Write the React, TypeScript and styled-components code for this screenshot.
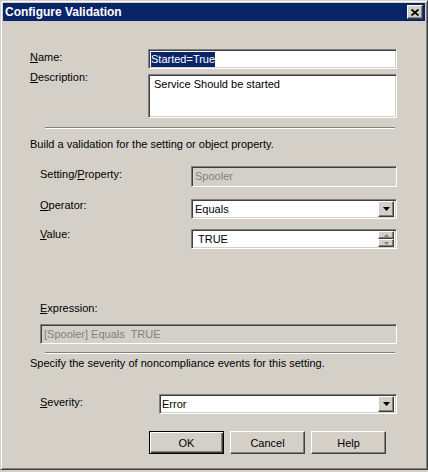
import React from 'react';
import styled, { createGlobalStyle } from 'styled-components';

const GlobalStyle = createGlobalStyle`
  html, body {
    margin: 0;
    padding: 0;
    background: #d4d0c8;
  }
  body {
    font-family: Tahoma, "Liberation Sans", Arial, sans-serif;
    font-size: 11px;
    color: #000;
  }
`;

const Window = styled.div`
  box-sizing: border-box;
  width: 428px;
  height: 470px;
  background: #d4d0c8;
  border: 1px solid;
  border-color: #d4d0c8 #404040 #404040 #d4d0c8;
  box-shadow: inset 1px 1px #fff, inset -1px -1px #808080;
  padding: 2px;
  display: flex;
  flex-direction: column;
`;

const TitleBar = styled.div`
  height: 18px;
  flex-shrink: 0;
  background: #0a246a;
  color: #fff;
  font-weight: bold;
  font-size: 12px;
  display: flex;
  align-items: center;
  justify-content: space-between;
  padding: 0 2px;
`;

const Raised = styled.div`
  box-sizing: border-box;
  background: #d4d0c8;
  border: 1px solid;
  border-color: #fff #404040 #404040 #fff;
  box-shadow: inset -1px -1px #808080;
  display: flex;
  align-items: center;
  justify-content: center;
`;

const CloseButton = styled(Raised)`
  width: 16px;
  height: 14px;
`;

const Content = styled.div`
  display: flex;
  flex-direction: column;
  padding: 0 28px 0 27px;
`;

const Row = styled.div<{ $top: number; $indent?: number }>`
  display: flex;
  align-items: flex-start;
  margin-top: ${(p) => p.$top}px;
  padding-left: ${(p) => p.$indent ?? 0}px;
`;

const Label = styled.div<{ $width?: number; $offset?: number }>`
  width: ${(p) => (p.$width ? `${p.$width}px` : 'auto')};
  flex-shrink: 0;
  margin-top: ${(p) => p.$offset ?? 0}px;
  line-height: 13px;
  white-space: nowrap;
`;

const Key = styled.span`
  text-decoration: underline;
`;

const Field = styled.div<{ $width: number; $height: number; $disabled?: boolean; $pad?: number }>`
  box-sizing: border-box;
  width: ${(p) => p.$width}px;
  height: ${(p) => p.$height}px;
  background: ${(p) => (p.$disabled ? '#d4d0c8' : '#fff')};
  color: ${(p) => (p.$disabled ? '#808080' : '#000')};
  border: 1px solid;
  border-color: #808080 #fff #fff #808080;
  box-shadow: inset 1px 1px #404040, inset -1px -1px #d4d0c8;
  padding: 2px 2px 0 ${(p) => p.$pad ?? 3}px;
  line-height: 15px;
  display: flex;
  align-items: flex-start;
  white-space: nowrap;
`;

const FieldText = styled.span`
  flex: 1;
`;

const Selected = styled.span`
  background: #0a246a;
  color: #fff;
`;

const DropButton = styled(Raised)`
  width: 16px;
  height: 16px;
  margin-left: auto;
  margin-top: -1px;
`;

const Spin = styled.div`
  display: flex;
  flex-direction: column;
  margin-left: auto;
  margin-top: -1px;
`;

const SpinButton = styled(Raised)`
  width: 16px;
  height: 8px;
`;

const Separator = styled.div<{ $top: number }>`
  margin: ${(p) => p.$top}px 0 0 15px;
  width: 350px;
  height: 1px;
  background: #808080;
  border-bottom: 1px solid #fff;
`;

const Text = styled.div<{ $top: number }>`
  margin-top: ${(p) => p.$top}px;
  line-height: 13px;
  white-space: nowrap;
`;

const Buttons = styled.div`
  display: flex;
  gap: 6px;
  margin-top: 17px;
  padding-left: 119px;
`;

const Button = styled(Raised)<{ $default?: boolean }>`
  width: 75px;
  height: 23px;
  ${(p) =>
    p.$default
      ? `
    border-color: #000;
    box-shadow: inset 1px 1px #fff, inset -1px -1px #404040, inset -2px -2px #808080;
  `
      : ''}
`;

const ArrowDown = () => (
  <svg width="7" height="4" viewBox="0 0 7 4">
    <path d="M0 0h7L3.5 4z" fill="#000" />
  </svg>
);

const SmallArrow = ({ up }: { up?: boolean }) => (
  <svg width="5" height="3" viewBox="0 0 5 3">
    <path d={up ? 'M2.5 0L5 3H0z' : 'M0 0h5L2.5 3z'} fill="#808080" />
  </svg>
);

export default function App() {
  return (
    <>
      <GlobalStyle />
      <Window>
        <TitleBar>
          <span>Configure Validation</span>
          <CloseButton>
            <svg width="8" height="7" viewBox="0 0 8 7">
              <path d="M0.5 0.5l7 6M7.5 0.5l-7 6" stroke="#000" strokeWidth="1.8" />
            </svg>
          </CloseButton>
        </TitleBar>
        <Content>
          <Row $top={28}>
            <Label $width={118} $offset={2}>
              <Key>N</Key>ame:
            </Label>
            <Field $width={249} $height={20} $pad={2}>
              <Selected>Started=True</Selected>
            </Field>
          </Row>
          <Row $top={5}>
            <Label $width={118} $offset={-3}>
              <Key>D</Key>escription:
            </Label>
            <Field $width={249} $height={44} $pad={5}>
              Service Should be started
            </Field>
          </Row>
          <Separator $top={9} />
          <Text $top={9}>Build a validation for the setting or object property.</Text>
          <Row $top={15} $indent={10}>
            <Label $width={151} $offset={2}>
              Setting/<Key>P</Key>roperty:
            </Label>
            <Field $width={206} $height={21} $disabled>
              Spooler
            </Field>
          </Row>
          <Row $top={12} $indent={10}>
            <Label $width={151} $offset={0}>
              <Key>O</Key>perator:
            </Label>
            <Field $width={206} $height={20}>
              <FieldText>Equals</FieldText>
              <DropButton>
                <ArrowDown />
              </DropButton>
            </Field>
          </Row>
          <Row $top={10} $indent={10}>
            <Label $width={151} $offset={-1}>
              <Key>V</Key>alue:
            </Label>
            <Field $width={206} $height={20} $pad={6}>
              <FieldText>TRUE</FieldText>
              <Spin>
                <SpinButton>
                  <SmallArrow up />
                </SpinButton>
                <SpinButton>
                  <SmallArrow />
                </SpinButton>
              </Spin>
            </Field>
          </Row>
          <Row $top={53} $indent={10}>
            <Label>
              <Key>E</Key>xpression:
            </Label>
          </Row>
          <Row $top={9} $indent={10}>
            <Field $width={357} $height={20} $disabled>
              [Spooler] Equals&nbsp; TRUE
            </Field>
          </Row>
          <Separator $top={8} />
          <Text $top={3}>Specify the severity of noncompliance events for this setting.</Text>
          <Row $top={24} $indent={10}>
            <Label $width={119} $offset={2}>
              <Key>S</Key>everity:
            </Label>
            <Field $width={250} $height={20} $pad={2}>
              <FieldText>Error</FieldText>
              <DropButton>
                <ArrowDown />
              </DropButton>
            </Field>
          </Row>
          <Buttons>
            <Button $default>OK</Button>
            <Button>Cancel</Button>
            <Button>Help</Button>
          </Buttons>
        </Content>
      </Window>
    </>
  );
}
